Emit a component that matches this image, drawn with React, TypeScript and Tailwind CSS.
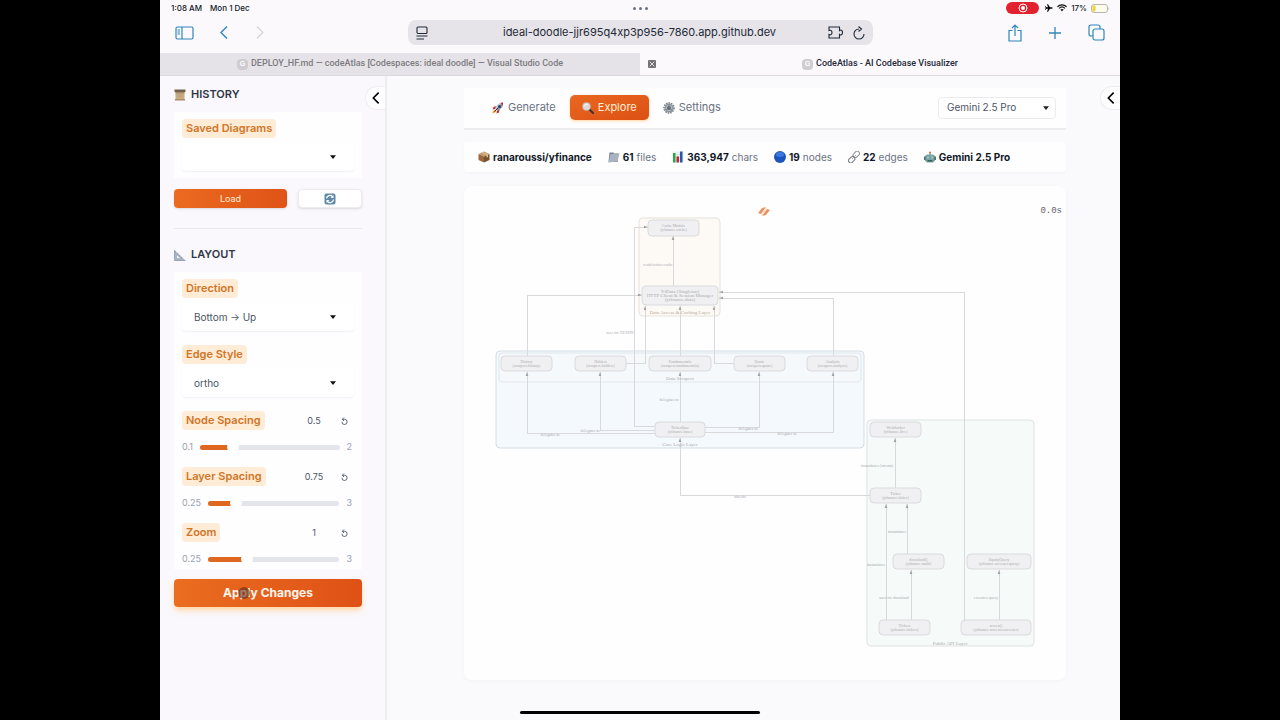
import { useState } from 'react';
import type { ReactNode } from 'react';

/* ---------- Small pictograms ---------- */

function ScrollIcon() {
  return (
    <svg viewBox="0 0 24 24" className="h-3 w-3 shrink-0" aria-hidden="true">
      <path d="M3 4h18v17H3z" fill="#c7ab83" />
      <path d="M1 1h22v5H1z" fill="#74604a" />
      <path d="M3 6h18v3H3z" fill="#a68b66" />
      <path d="M2 20h20v3H2z" fill="#aa8d66" />
      <path d="M7 12h10M7 15h10" stroke="#b79a70" strokeWidth="1" />
    </svg>
  );
}

function RulerIcon() {
  return (
    <svg viewBox="0 0 24 24" className="h-3 w-3 shrink-0" aria-hidden="true">
      <path d="M1 2v21h22z M6 13v5h6z" fill="#a9b5c4" fillRule="evenodd" />
      <path d="M1 2v21h22" fill="none" stroke="#8794a5" strokeWidth="1.5" />
      <path d="M4 5l-2 1M8 9l-2 1M12 13l-2 1M16 17l-2 1" stroke="#6f7c8d" />
    </svg>
  );
}

function RefreshIcon() {
  return (
    <svg viewBox="0 0 24 24" className="h-3 w-3" aria-hidden="true">
      <rect x="1" y="1" width="22" height="22" rx="4" fill="#5f87a8" />
      <path d="M5 11a7 7 0 0 1 12-4M19 13a7 7 0 0 1-12 4" fill="none" stroke="#fff" strokeWidth="2.6" />
      <path d="M19 4v6h-6zM5 20v-6h6z" fill="#fff" />
    </svg>
  );
}

function RocketIcon() {
  return (
    <svg viewBox="0 0 24 24" className="h-3 w-3 shrink-0" aria-hidden="true">
      <path d="M6 15l-5 5 1 3 7-4z" fill="#f39a2c" />
      <path d="M9 8L3 10l-2 5 6-1zM15 15l-1 6-5 2 1-6z" fill="#b92f36" />
      <path d="M22 1c-7 0-12 5-16 12l5 5C18 14 23 9 22 1z" fill="#8d93a1" />
      <path d="M22 1c-7 0-12 5-16 12l2 2C13 8 17 4 22 1z" fill="#c9ced8" />
      <path d="M22 1l-5 1 5 5z" fill="#b92f36" />
      <circle cx="15" cy="9" r="3" fill="#263e73" />
      <path d="M12 12l-7 7" stroke="#571f34" strokeWidth="2" />
    </svg>
  );
}

function MagnifierIcon() {
  return (
    <svg viewBox="0 0 24 24" className="h-3 w-3 shrink-0" aria-hidden="true">
      <path d="M14 14l8 8" stroke="#3d3230" strokeWidth="4" strokeLinecap="round" />
      <circle cx="9" cy="9" r="8" fill="#dfd8d7" stroke="#b5a9a7" strokeWidth="1" />
      <path d="M5 8c1-3 4-4 6-3" fill="none" stroke="#fff" strokeWidth="2" />
    </svg>
  );
}

function GearIcon() {
  return (
    <svg viewBox="0 0 24 24" className="h-3 w-3 shrink-0" aria-hidden="true">
      <circle cx="12" cy="12" r="10" fill="none" stroke="#777d85" strokeWidth="3" strokeDasharray="3 2" />
      <circle cx="12" cy="12" r="9" fill="#8f959c" />
      <circle cx="12" cy="12" r="6" fill="#b9bec4" />
      <path d="M12 12V5M12 12l6 4M12 12l-6 4" stroke="#777d85" strokeWidth="2" />
      <circle cx="12" cy="12" r="4" fill="#646b74" />
    </svg>
  );
}

function PackageIcon() {
  return (
    <svg viewBox="0 0 24 24" className="h-3 w-3 shrink-0" aria-hidden="true">
      <path d="M12 1l11 5-11 5L1 6z" fill="#c79a6c" />
      <path d="M1 6l11 5v12L1 18z" fill="#9a683e" />
      <path d="M23 6l-11 5v12l11-5z" fill="#7b4e2c" />
      <path d="M6 3l11 5v5l3-1V7L9 2z" fill="#e0c39b" />
    </svg>
  );
}

function FolderIcon() {
  return (
    <svg viewBox="0 0 24 24" className="h-3 w-3 shrink-0" aria-hidden="true">
      <path d="M3 3h8l1 2h9l-2 17H1z" fill="#74818e" />
      <path d="M5 6l18-1-4 16-18 2z" fill="#a9b4bf" />
    </svg>
  );
}

function ChartIcon() {
  return (
    <svg viewBox="0 0 24 24" className="h-3 w-3 shrink-0" aria-hidden="true">
      <rect x="1" y="1" width="22" height="22" fill="#e9eef1" />
      <path d="M1 7h22M1 13h22M1 19h22" stroke="#c9d2d8" />
      <rect x="2" y="4" width="5" height="19" fill="#2da648" />
      <rect x="9" y="11" width="5" height="12" fill="#c4263c" />
      <rect x="16" y="1" width="5" height="22" fill="#2759a3" />
    </svg>
  );
}

function BlueDotIcon() {
  return (
    <svg viewBox="0 0 24 24" className="h-3 w-3 shrink-0" aria-hidden="true">
      <circle cx="12" cy="12" r="12" fill="#1c54bd" />
      <ellipse cx="12" cy="7" rx="8" ry="5" fill="#3b78de" />
    </svg>
  );
}

function LinkIcon() {
  return (
    <svg viewBox="0 0 24 24" className="h-3 w-3 shrink-0" fill="none" strokeWidth="2" aria-hidden="true">
      <rect x="10" y="2" width="14" height="9" rx="4" transform="rotate(-45 17 7)" stroke="#8d9196" />
      <rect x="0" y="13" width="14" height="9" rx="4" transform="rotate(-45 7 17)" stroke="#777b80" />
      <path d="M8 16l8-8" stroke="#a6a9ad" />
    </svg>
  );
}

function RobotIcon() {
  return (
    <svg viewBox="0 0 24 24" className="h-3 w-3 shrink-0" aria-hidden="true">
      <path d="M12 2v6" stroke="#777" strokeWidth="2" />
      <circle cx="12" cy="3" r="2" fill="#d9703d" />
      <path d="M2 10l4-3h12l4 3v9l-4 4H6l-4-4z" fill="#77a4a0" />
      <path d="M0 11h3v7H0zM21 11h3v7h-3z" fill="#46716e" />
      <circle cx="8" cy="13" r="2" fill="#a9cac5" />
      <circle cx="16" cy="13" r="2" fill="#a9cac5" />
      <path d="M7 18h10v3H7z" fill="#385d5b" />
    </svg>
  );
}

function Caret() {
  return (
    <svg viewBox="0 0 8 5" className="pointer-events-none absolute right-[18px] top-1/2 h-1 w-1.5 -translate-y-1/2" aria-hidden="true">
      <path d="M0 0h8L4 5z" fill="#111" />
    </svg>
  );
}

function ChevronLeft() {
  return (
    <svg viewBox="0 0 12 18" className="h-3 w-2" fill="none" stroke="currentColor" strokeWidth="2.4" aria-hidden="true">
      <path d="M10 1L2 9l8 8" />
    </svg>
  );
}

/* ---------- Browser chrome ---------- */

function StatusBar() {
  return (
    <div className="grid h-4 grid-cols-3 items-center pl-[11px] pr-2.5 text-[8px] font-medium text-gray-900">
      <div className="flex gap-2">
        <span>1:08 AM</span>
        <span>Mon 1 Dec</span>
      </div>
      <div className="flex justify-center gap-[3px]">
        <span className="h-[3px] w-[3px] rounded-full bg-gray-500" />
        <span className="h-[3px] w-[3px] rounded-full bg-gray-500" />
        <span className="h-[3px] w-[3px] rounded-full bg-gray-500" />
      </div>
      <div className="flex items-center justify-end gap-1">
        <span className="mr-0.5 flex h-3 w-[33px] items-center justify-center rounded-full bg-[#e2222f]">
          <svg viewBox="0 0 20 20" className="h-2.5 w-2.5" aria-hidden="true">
            <circle cx="10" cy="10" r="8" fill="none" stroke="#fff" strokeWidth="2" />
            <circle cx="10" cy="10" r="4" fill="#fff" />
          </svg>
        </span>
        <svg viewBox="0 0 24 24" className="h-2 w-2" aria-hidden="true">
          <path d="M23 12c0-1-1-2-3-2h-5L9 1H6l3 9H5L2 7H0l2 5-2 5h2l3-3h4l-3 9h3l6-9h5c2 0 3-1 3-2z" />
        </svg>
        <svg viewBox="0 0 24 18" className="h-2 w-2.5" fill="none" stroke="#111" strokeWidth="3" aria-hidden="true">
          <path d="M1 6c6-6 16-6 22 0M5 10c4-4 10-4 14 0" />
          <path d="M8 13c2-2 6-2 8 0l-4 4z" fill="#111" stroke="none" />
        </svg>
        <span>17%</span>
        <svg viewBox="0 0 38 18" className="h-[9px] w-[19px]" aria-hidden="true">
          <rect x="1" y="1" width="32" height="16" rx="5" fill="#fdfbee" stroke="#b9b7ae" strokeWidth="2" />
          <rect x="3" y="3" width="6" height="12" rx="2" fill="#ecd438" />
          <path d="M35 6q3 3 0 6z" fill="#aaa" />
        </svg>
      </div>
    </div>
  );
}

function Toolbar() {
  return (
    <div className="mb-1 flex h-[33px] items-center px-[15px] text-[#2f86bb]">
      <div className="flex flex-1 items-center">
        <button aria-label="Show sidebar">
          <svg viewBox="0 0 38 28" className="h-3.5 w-[19px]" fill="none" stroke="currentColor" strokeWidth="2.4" aria-hidden="true">
            <rect x="2" y="2" width="34" height="24" rx="3" />
            <path d="M14 2v24M5 8h5M5 12h5M5 16h5" />
          </svg>
        </button>
        <button aria-label="Back" className="ml-[26px]">
          <svg viewBox="0 0 16 26" className="h-[13px] w-2" fill="none" stroke="currentColor" strokeWidth="2.8" aria-hidden="true">
            <path d="M14 1L2 13l12 12" />
          </svg>
        </button>
        <button aria-label="Forward" className="ml-7 text-gray-300">
          <svg viewBox="0 0 16 26" className="h-[13px] w-2" fill="none" stroke="currentColor" strokeWidth="2.4" aria-hidden="true">
            <path d="M2 1l12 12L2 25" />
          </svg>
        </button>
      </div>
      <div className="flex h-[25px] w-1/2 items-center rounded-lg bg-[#e6e4e8] px-2 text-gray-800">
        <button aria-label="Page menu">
          <svg viewBox="0 0 24 28" className="h-[14px] w-3" fill="none" stroke="currentColor" strokeWidth="2.2" aria-hidden="true">
            <rect x="2" y="2" width="20" height="13" rx="2" />
            <path d="M1 20h22M1 26h15" />
          </svg>
        </button>
        <input
          aria-label="Address"
          defaultValue="ideal-doodle-jjr695q4xp3p956-7860.app.github.dev"
          className="min-w-0 flex-1 bg-transparent pl-6 text-center text-[11px] text-gray-800 outline-none"
        />
        <button aria-label="Extensions">
          <svg viewBox="0 0 30 26" className="h-[13px] w-[15px]" fill="none" stroke="currentColor" strokeWidth="2.2" aria-hidden="true">
            <path d="M2 9V2h21v7c2-2 6-1 6 4s-4 6-6 4v7H2v-7c3 2 6 0 6-4s-3-5-6-4z" />
          </svg>
        </button>
        <button aria-label="Reload" className="ml-2.5">
          <svg viewBox="0 0 24 28" className="h-[14px] w-3" fill="none" stroke="currentColor" strokeWidth="2.2" aria-hidden="true">
            <path d="M12 6a10 10 0 1 0 10 10M11 1l6 5-6 5" />
          </svg>
        </button>
      </div>
      <div className="flex flex-1 items-center justify-end gap-[27px]">
        <button aria-label="Share">
          <svg viewBox="0 0 28 36" className="h-[18px] w-3.5" fill="none" stroke="currentColor" strokeWidth="2.4" aria-hidden="true">
            <path d="M9 13H2v21h24V13h-7M14 24V2M8 8l6-6 6 6" />
          </svg>
        </button>
        <button aria-label="New tab">
          <svg viewBox="0 0 26 26" className="h-3 w-3" fill="none" stroke="currentColor" strokeWidth="2.8" aria-hidden="true">
            <path d="M13 0v26M0 13h26" />
          </svg>
        </button>
        <button aria-label="Show tabs">
          <svg viewBox="0 0 34 34" className="h-[17px] w-[17px]" fill="none" stroke="currentColor" strokeWidth="2.4" aria-hidden="true">
            <rect x="10" y="10" width="22" height="22" rx="4" />
            <path d="M10 24H6q-4 0-4-4V6q0-4 4-4h14q4 0 4 4v4" />
          </svg>
        </button>
      </div>
    </div>
  );
}

function Favicon() {
  return (
    <span className="flex h-[11px] w-[11px] items-center justify-center rounded-sm bg-[#cfccd2] text-[8px] text-white">G</span>
  );
}

function BrowserTabs() {
  return (
    <div className="grid h-[23px] grid-cols-2 border-b border-[#dcdade] font-[Roboto,sans-serif] text-[9px] font-medium">
      <button className="flex items-center justify-center gap-[3px] bg-[#e5e3e7] text-[#7d7b80]">
        <Favicon />
        DEPLOY_HF.md — codeAtlas [Codespaces: ideal doodle] — Visual Studio Code
      </button>
      <div className="flex items-center pl-2 pr-4">
        <button aria-label="Close tab" className="flex h-2 w-2 items-center justify-center rounded-[1px] bg-[#747277]">
          <svg viewBox="0 0 8 8" className="h-1.5 w-1.5" stroke="#fff" aria-hidden="true">
            <path d="M1 1l6 6M7 1L1 7" />
          </svg>
        </button>
        <button className="flex flex-1 items-center justify-center gap-[3px] text-gray-800">
          <Favicon />
          CodeAtlas - AI Codebase Visualizer
        </button>
      </div>
    </div>
  );
}

/* ---------- Sidebar ---------- */

const chip = 'flex h-[19px] w-fit items-center rounded-sm bg-[#feecd6] px-1 text-[11px] font-semibold text-[#d27527]';

function SectionTitle({ icon, children }: { icon: ReactNode; children: ReactNode }) {
  return (
    <h2 className="flex h-[19px] items-center gap-[5px] text-[11px] font-semibold text-[#303747]">
      {icon}
      {children}
    </h2>
  );
}

function Dropdown({ id, label, options }: { id: string; label: string; options: string[] }) {
  return (
    <div>
      <label htmlFor={id} className={chip}>{label}</label>
      <div className="relative mt-[5px]">
        <select
          id={id}
          className="block h-7 w-full appearance-none rounded-sm bg-white px-3 text-[10px] text-gray-600 shadow-[0_1px_2px_rgba(0,0,0,0.06)] outline-none"
        >
          {options.map((option) => (
            <option key={option}>{option}</option>
          ))}
        </select>
        <Caret />
      </div>
    </div>
  );
}

type SliderProps = { id: string; label: string; min: number; max: number; initial: number };

function Slider({ id, label, min, max, initial }: SliderProps) {
  const [value, setValue] = useState(initial);
  const percent = ((value - min) / (max - min)) * 100;

  return (
    <div>
      <div className="flex items-center">
        <label htmlFor={id} className={chip}>{label}</label>
        <input
          aria-label={`${label} value`}
          value={value}
          onChange={(e) => setValue(Number(e.target.value) || min)}
          className="ml-auto w-8 bg-transparent text-center text-[9px] text-gray-600 outline-none"
        />
        <button
          aria-label={`Reset ${label}`}
          onClick={() => setValue(initial)}
          className="ml-1 flex w-5 justify-center text-gray-600"
        >
          <svg viewBox="0 0 16 18" className="h-2 w-[7px]" fill="none" stroke="currentColor" strokeWidth="2" aria-hidden="true">
            <path d="M2 11a6 6 0 1 0 6-6H3M7 1L3 5l4 4" />
          </svg>
        </button>
      </div>
      <div className="mt-[11px] flex h-3 items-center gap-[7px] pr-0.5 text-[9px] text-gray-400">
        <span>{min}</span>
        <input
          id={id}
          type="range"
          min={min}
          max={max}
          step={0.05}
          value={value}
          onChange={(e) => setValue(Number(e.target.value))}
          style={{ backgroundImage: `linear-gradient(to right, #df6720 ${percent}%, #e3e5ea ${percent}%)` }}
          className="h-[5px] min-w-0 flex-1 appearance-none rounded-sm [&::-webkit-slider-thumb]:h-3 [&::-webkit-slider-thumb]:w-3 [&::-webkit-slider-thumb]:appearance-none [&::-webkit-slider-thumb]:rounded-full [&::-webkit-slider-thumb]:bg-white"
        />
        <span>{max}</span>
      </div>
    </div>
  );
}

function Sidebar() {
  return (
    <aside className="relative w-[227px] shrink-0 border-r-2 border-[#efedf2] bg-[#faf8fc] pl-3.5 pr-[23px] pt-[9px]">
      <button
        aria-label="Collapse sidebar"
        className="absolute right-0 top-2.5 flex h-6 w-5 items-center justify-center rounded-l-full border border-r-0 border-[#efedf1] bg-white/60 text-black"
      >
        <ChevronLeft />
      </button>

      <SectionTitle icon={<ScrollIcon />}>HISTORY</SectionTitle>
      <div className="mt-2 bg-[#fefdff] px-2 pb-[7px] pt-[7px]">
        <Dropdown id="saved" label="Saved Diagrams" options={['']} />
      </div>
      <div className="mt-[11px] flex gap-[11px]">
        <button className="h-[19px] flex-1 rounded bg-linear-to-r from-[#eb6a20] to-[#df5317] text-[9px] text-orange-100 shadow-sm">
          Load
        </button>
        <button
          aria-label="Refresh diagrams"
          className="flex h-[19px] w-16 items-center justify-center rounded border border-[#eeecf1] bg-white shadow-sm"
        >
          <RefreshIcon />
        </button>
      </div>
      <hr className="mb-4 mt-5 border-[#ebe9ee]" />

      <SectionTitle icon={<RulerIcon />}>LAYOUT</SectionTitle>
      <div className="mt-2 flex flex-col gap-3.5 bg-[#fefdff] px-2 pb-1 pt-[7px]">
        <Dropdown id="direction" label="Direction" options={['Bottom → Up', 'Top → Down', 'Left → Right']} />
        <Dropdown id="edges" label="Edge Style" options={['ortho', 'spline', 'polyline']} />
        <Slider id="node-spacing" label="Node Spacing" min={0.1} max={2} initial={0.5} />
        <Slider id="layer-spacing" label="Layer Spacing" min={0.25} max={3} initial={0.75} />
        <Slider id="zoom" label="Zoom" min={0.25} max={3} initial={1} />
      </div>
      <button className="relative mt-2.5 h-7 w-full rounded bg-linear-to-r from-[#ea6d20] to-[#df5116] text-[12px] font-bold text-orange-50 shadow-md shadow-orange-200">
        Apply Changes
        {/* Touch pointer */}
        <span className="absolute left-16 top-2 h-3 w-3 rounded-full bg-[#5b2c18]/60" />
      </button>
    </aside>
  );
}

/* ---------- Main area ---------- */

function TopNav() {
  return (
    <div className="flex items-center border-b-2 border-[#ececef] bg-[#fefeff] pb-2 pl-4 pr-2.5 pt-[7px] text-[11px] text-gray-500">
      <nav className="flex items-center gap-0.5">
        <button className="flex h-[25px] items-center gap-1 px-3">
          <RocketIcon />
          Generate
        </button>
        <button className="flex h-[25px] items-center gap-1 rounded-[5px] bg-linear-to-br from-[#e96820] to-[#dc5014] px-3 text-orange-100 shadow-sm shadow-orange-200">
          <MagnifierIcon />
          Explore
        </button>
        <button className="flex h-[25px] items-center gap-1 px-3">
          <GearIcon />
          Settings
        </button>
      </nav>
      <div className="relative ml-auto w-[118px]">
        <select
          aria-label="Model"
          className="block h-[22px] w-full appearance-none rounded border border-[#ececef] bg-white px-2 text-[10px] text-gray-600 outline-none"
        >
          <option>Gemini 2.5 Pro</option>
        </select>
        <svg viewBox="0 0 8 5" className="pointer-events-none absolute right-[7px] top-1/2 h-1 w-1.5 -translate-y-1/2" aria-hidden="true">
          <path d="M0 0h8L4 5z" fill="#222" />
        </svg>
      </div>
    </div>
  );
}

const stats = [
  { icon: <PackageIcon />, strong: 'ranaroussi/yfinance', rest: '' },
  { icon: <FolderIcon />, strong: '61', rest: 'files' },
  { icon: <ChartIcon />, strong: '363,947', rest: 'chars' },
  { icon: <BlueDotIcon />, strong: '19', rest: 'nodes' },
  { icon: <LinkIcon />, strong: '22', rest: 'edges' },
  { icon: <RobotIcon />, strong: 'Gemini 2.5 Pro', rest: '' },
];

function StatsBar() {
  return (
    <div className="mt-3 flex h-[30px] items-center gap-4 rounded bg-[#fefeff] pl-3.5 text-[10px] text-gray-500 shadow-[0_1px_3px_rgba(0,0,0,0.03)]">
      {stats.map((s) => (
        <span key={s.strong} className="flex items-center gap-[3px] whitespace-nowrap">
          {s.icon}
          <b className="font-bold text-gray-900">{s.strong}</b>
          {s.rest}
        </span>
      ))}
    </div>
  );
}

/* ---------- Diagram ---------- */

const nodes = [
  { x: 648, y: 220, w: 51, h: 16, lines: ['Cache Module', '(yfinance.cache)'] },
  { x: 642, y: 286, w: 76, h: 19, lines: ['YfData (Singleton)', 'HTTP Client & Session Manager', '(yfinance.data)'] },
  { x: 501, y: 356, w: 51, h: 15, lines: ['History', '(scrapers.history)'] },
  { x: 575, y: 356, w: 51, h: 15, lines: ['Holders', '(scrapers.holders)'] },
  { x: 649, y: 356, w: 62, h: 15, lines: ['Fundamentals', '(scrapers.fundamentals)'] },
  { x: 734, y: 356, w: 51, h: 15, lines: ['Quote', '(scrapers.quote)'] },
  { x: 807, y: 356, w: 51, h: 15, lines: ['Analysis', '(scrapers.analysis)'] },
  { x: 655, y: 422, w: 50, h: 15, lines: ['TickerBase', '(yfinance.base)'] },
  { x: 870, y: 422, w: 51, h: 15, lines: ['WebSocket', '(yfinance.live)'] },
  { x: 870, y: 488, w: 51, h: 15, lines: ['Ticker', '(yfinance.ticker)'] },
  { x: 893, y: 554, w: 51, h: 15, lines: ['download()', '(yfinance.multi)'] },
  { x: 967, y: 554, w: 64, h: 15, lines: ['EquityQuery', '(yfinance.screener.query)'] },
  { x: 879, y: 620, w: 51, h: 15, lines: ['Tickers', '(yfinance.tickers)'] },
  { x: 961, y: 620, w: 70, h: 15, lines: ['screen()', '(yfinance.screener.screener)'] },
];

const edges = [
  'M673 286V236',
  'M655 426H634V227H648',
  'M527 356V295H642',
  'M626 363H645V306',
  'M680 356V306',
  'M734 363H714V306',
  'M833 356V298H719',
  'M964 620V292H719',
  'M655 433H527V372',
  'M655 430H600V372',
  'M680 422V372',
  'M705 427H759V372',
  'M705 432H833V372',
  'M870 495H680V438',
  'M895 488V438',
  'M886 620V504',
  'M907 554V504',
  'M911 620V570',
  'M999 620V570',
];

const edgeLabels = [
  { x: 658, y: 266, text: 'reads/writes cache' },
  { x: 620, y: 334, text: 'uses for TZ/ISIN' },
  { x: 669, y: 401, text: 'delegates to' },
  { x: 590, y: 432, text: 'delegates to' },
  { x: 550, y: 436, text: 'delegates to' },
  { x: 748, y: 430, text: 'delegates to' },
  { x: 787, y: 435, text: 'delegates to' },
  { x: 740, y: 498, text: 'inherits' },
  { x: 877, y: 467, text: 'instantiates (stream)' },
  { x: 897, y: 533, text: 'instantiates' },
  { x: 876, y: 566, text: 'instantiates' },
  { x: 894, y: 599, text: 'uses for download' },
  { x: 986, y: 599, text: 'executes query' },
];

function Diagram() {
  return (
    <svg viewBox="464 186 602 494" className="block w-full" role="img" aria-label="Architecture diagram">
      <defs>
        <marker id="arrow" viewBox="0 0 6 6" refX="6" refY="3" markerWidth="4" markerHeight="4" orient="auto">
          <path d="M0 1l6 2-6 2z" fill="#a1a1a5" />
        </marker>
      </defs>
      <g strokeWidth="1">
        <rect x="639" y="218" width="81" height="98" rx="4" fill="#fdfaf6" stroke="#e8e2d8" />
        <rect x="496" y="351" width="368" height="97" rx="4" fill="#f4f9fd" stroke="#d3dee5" />
        <rect x="499" y="353" width="362" height="29" rx="3" fill="#f5f9fc" stroke="#dfe7ed" />
        <rect x="867" y="420" width="167" height="226" rx="4" fill="#f6faf8" stroke="#dde3e0" />
      </g>
      <g fill="none" stroke="#d9d9dc" shapeRendering="crispEdges">
        {edges.map((d) => (
          <path key={d} d={d} markerEnd="url(#arrow)" />
        ))}
      </g>
      <g fontFamily="'Liberation Serif', serif" textAnchor="middle" fill="#aaaab0">
        {nodes.map((n) => (
          <g key={n.lines[1]}>
            <rect x={n.x} y={n.y} width={n.w} height={n.h} rx="4" fill="#f0f0f2" stroke="#dadade" />
            {n.lines.map((line, i) => (
              <text key={line} x={n.x + n.w / 2} y={n.y + 7 + i * 4} fontSize={n.lines.length > 2 ? 5 : 4}>
                {line}
              </text>
            ))}
          </g>
        ))}
        {edgeLabels.map((l) => (
          <text key={`${l.x}-${l.y}`} x={l.x} y={l.y} fontSize="4">
            {l.text}
          </text>
        ))}
        <g fontSize="5">
          <text x="680" y="314" fill="#b5a994">Data Access &amp; Caching Layer</text>
          <text x="680" y="380">Data Scrapers</text>
          <text x="680" y="446">Core Logic Layer</text>
          <text x="950" y="645">Public API Layer</text>
        </g>
      </g>
      {/* Progress spinner and elapsed time */}
      <g fill="#e8935f">
        <path d="M758 213l4-5 4-1-5 7zM762 216l5-7 3 1-4 5z" />
        <path d="M761 214l5-7 1 2-5 7z" fill="#f9dcc8" />
      </g>
      <text x="1062" y="213" textAnchor="end" fontFamily="'Liberation Mono', monospace" fontSize="9" fill="#62626a">
        0.0s
      </text>
    </svg>
  );
}

export default function App() {
  return (
    <div className="flex min-h-screen justify-center bg-black font-[Inter,sans-serif]">
      <div className="relative flex w-3/4 flex-col bg-[#fbf9fc]">
        <header>
          <StatusBar />
          <Toolbar />
          <BrowserTabs />
        </header>

        <div className="flex flex-1">
          <Sidebar />
          <main className="relative min-w-0 flex-1 bg-[#fafafc] pb-6 pl-[77px] pr-[54px] pt-3">
            <button
              aria-label="Open right panel"
              className="absolute right-0 top-2.5 flex h-6 w-5 items-center justify-center rounded-l-full border border-r-0 border-[#ededf0] bg-white/60 text-black"
            >
              <ChevronLeft />
            </button>
            <TopNav />
            <StatsBar />
            <section className="mt-3.5 rounded-lg bg-[#fefeff] shadow-[0_1px_4px_rgba(0,0,0,0.03)]">
              <Diagram />
            </section>
          </main>
        </div>

        {/* Home indicator */}
        <div className="absolute inset-x-0 bottom-1.5 mx-auto h-[3px] w-1/4 rounded-full bg-black" />
      </div>
    </div>
  );
}
